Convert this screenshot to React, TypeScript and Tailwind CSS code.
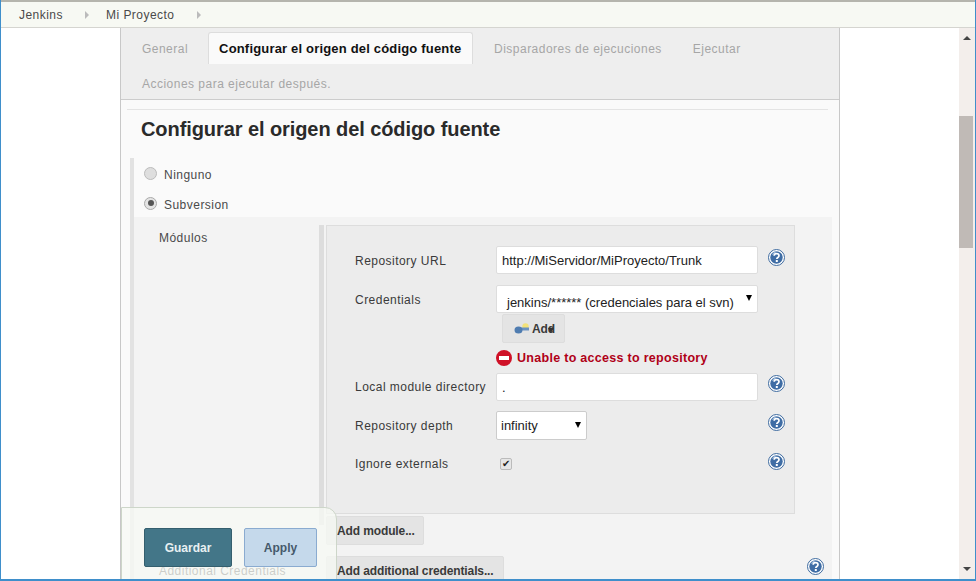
const labelCls = 'w-[141px] shrink-0 text-[#3a3a3a] text-[12px] tracking-[0.47px]'

function Help({ className = '' }: { className?: string }) {
  return (
    <svg width="17" height="17" viewBox="0 0 17 17" className={className}>
      <circle cx="8.5" cy="8.5" r="8" fill="#fff" stroke="#3d6a9f" strokeWidth="1" />
      <circle cx="8.5" cy="8.5" r="6.2" fill="#3f6da5" />
      <path d="M4 6a5 5 0 0 1 5-3.5c-2 1.5-3 3-5 3.5z" fill="#9dbbdc" />
      <path d="M6.2 6.8c0-3 4.8-3 4.8 0 0 1.8-2.2 1.6-2.2 3.3" fill="none" stroke="#fff" strokeWidth="1.7" />
      <rect x="7.8" y="11" width="2" height="2" fill="#fff" />
    </svg>
  )
}

function KeyIcon() {
  return (
    <svg width="16" height="12" viewBox="0 0 16 12" className="absolute left-[11px] top-[8px]">
      <circle cx="11.5" cy="3.5" r="3.2" fill="#f3e27a" />
      <rect x="4" y="4.5" width="11" height="3" fill="#6a92c2" />
      <ellipse cx="4.5" cy="7" rx="4" ry="3.6" fill="#4f7cb0" />
    </svg>
  )
}

function Row({ label, help = true, helpCls = '-mt-[6px]', labelTop = '', children, className = '' }: { label: string; help?: boolean; helpCls?: string; labelTop?: string; children: React.ReactNode; className?: string }) {
  return (
    <div className={`flex items-center ${className}`}>
      <div className={`${labelCls} ${labelTop}`}>{label}</div>
      <div className="w-[262px] shrink-0">{children}</div>
      {help && <Help className={`ml-[10px] ${helpCls}`} />}
    </div>
  )
}

function Input({ value }: { value: string }) {
  return (
    <div className="h-[28px] w-[262px] bg-white border border-[#ddd] rounded-[2px] px-[5px] pt-[2px] flex items-center text-[13px] text-[#222]">
      {value}
    </div>
  )
}

function Tab({ label, active = false }: { label: string; active?: boolean }) {
  if (active) {
    return (
      <div className="h-[32px] w-[265px] pl-[10px] pt-[1px] mr-[11px] flex items-center bg-[#fafafa] border border-b-0 border-[#ddd] rounded-t-[3px] font-bold text-[#111] text-[13px] tracking-[0.18px] whitespace-nowrap">
        {label}
      </div>
    )
  }
  return <div className="h-[32px] px-[10px] pt-[1px] mr-[11px] flex items-center text-[#a6a6a6] text-[12px] tracking-[0.48px]">{label}</div>
}

function GrayButton({ label, className = '', children }: { label: string; className?: string; children?: React.ReactNode }) {
  return (
    <div className={`bg-[#e4e4e4] border border-[#ddd] rounded-[2px] font-bold text-[12px] tracking-[-0.12px] text-[#3a3a3a] flex items-center ${className}`}>
      {children}
      {label}
    </div>
  )
}

export default function App() {
  return (
    <div className="relative h-[581px] w-[976px] overflow-hidden bg-white border-x border-b-2 border-[#3f8fcb] font-['Liberation_Sans',Arial,sans-serif] flex flex-col">
      <div className="h-[28px] shrink-0 bg-[#f7f9f3] border-t-2 border-t-[#b5b5ad] border-b border-b-[#d5d5d0] flex items-center pl-[18px] pt-[1px] text-[12px] text-[#4a4a4a] tracking-[0.47px]">
        <span>Jenkins</span>
        <span className="ml-[22px] w-0 h-0 border-y-[4px] border-y-transparent border-l-[4px] border-l-[#bbb]" />
        <span className="ml-[17px]">Mi Proyecto</span>
        <span className="ml-[22px] w-0 h-0 border-y-[4px] border-y-transparent border-l-[4px] border-l-[#bbb]" />
      </div>

      <div className="flex-1 min-h-0 flex">
        <div className="w-[119px] shrink-0" />
        <div className="w-[720px] shrink-0 border-x border-[#c8c8c8] bg-[#fafafa] overflow-hidden">
          <div className="h-[72px] bg-[#eee] border-b border-[#ccc] pt-[4px] pl-[10px]">
            <div className="flex items-center">
              <div className="ml-[1px] -mr-[1px]">
                <Tab label="General" />
              </div>
              <Tab label="Configurar el origen del código fuente" active />
              <Tab label="Disparadores de ejecuciones" />
              <Tab label="Ejecutar" />
            </div>
            <div className="h-[36px] pl-[11px] pt-[3px] flex items-center text-[#a6a6a6] text-[12px] tracking-[0.48px]">Acciones para ejecutar después.</div>
          </div>

          <div className="mt-[9px] mx-[6px] border-t border-[#e4e4e4] pl-[14px] pt-[8px] h-[38px] text-[20px] font-bold text-[#2a2a2a] tracking-[-0.08px] leading-[22px] w-[701px]">
            Configurar el origen del código fuente
          </div>

          <div className="ml-[9px] mt-[11px] border-l-[4px] border-[#e2e2e2]">
            <div className="h-[59px] pl-[10px] pt-[3px] text-[12px] text-[#4a4a4a] tracking-[0.47px]">
              <div className="h-[30px] flex items-center -mt-[1px]">
                <span className="w-[13px] h-[13px] -mt-[4px] rounded-full bg-[#dedede] border border-[#bbb] mr-[7px]" />
                <span>Ninguno</span>
              </div>
              <div className="h-[30px] flex items-center">
                <span className="w-[13px] h-[13px] -mt-[4px] rounded-full bg-[#e4e4e4] border border-[#aaa] mr-[7px] flex items-center justify-center">
                  <span className="w-[6px] h-[6px] rounded-full bg-[#555]" />
                </span>
                <span>Subversion</span>
              </div>
            </div>

            <div className="bg-[#f3f3f3] w-[698px] h-[380px] pt-[8px] flex">
              <div className="w-[185px] shrink-0 pl-[25px] pt-[5px] text-[12px] text-[#4a4a4a] tracking-[0.47px]">
                <div className="h-[16px] leading-[16px]">Módulos</div>
                <div className="h-[317px]" />
                <div className="h-[16px] leading-[16px]">Additional Credentials</div>
              </div>
              <div className="border-l-[5px] border-[#ddd] h-[300px] mr-[2px]" />
              <div className="flex-1">
                <div className="w-[469px] h-[289px] bg-[#ececec] border border-[#ddd] pl-[28px] pt-[20px]">
                  <Row label="Repository URL" labelTop="pt-[1px]">
                    <Input value="http://MiServidor/MiProyecto/Trunk" />
                  </Row>
                  <Row label="Credentials" labelTop="pt-[1px]" help={false} className="mt-[11px]">
                    <div className="relative h-[28px] w-[262px] bg-white border border-[#ddd] rounded-[2px] pl-[10px] overflow-hidden text-[13px] text-[#222] leading-[33px] whitespace-nowrap">
                      jenkins/****** (credenciales para el svn)
                      <span className="absolute right-[5px] top-[9px] w-0 h-0 border-x-[3.5px] border-x-transparent border-t-[6px] border-t-black" />
                    </div>
                  </Row>
                  <GrayButton label="Add" className="relative ml-[147px] mt-[1px] w-[63px] h-[29px] pl-[29px]">
                    <KeyIcon />
                    <span className="absolute left-[45px] top-[13px] w-0 h-0 border-x-[3.5px] border-x-transparent border-t-[5px] border-t-[#333]" />
                  </GrayButton>
                  <div className="ml-[141px] mt-[7px] h-[16px] flex items-center font-bold text-[12.5px] text-[#b00018] tracking-[0.29px]">
                    <span className="w-[16px] h-[16px] rounded-full bg-[#cf1127] mr-[5px] flex items-center justify-center shrink-0">
                      <span className="w-[10px] h-[4px] bg-white" />
                    </span>
                    Unable to access to repository
                  </div>
                  <Row label="Local module directory" helpCls="-mt-[8px]" className="mt-[7px]">
                    <Input value="." />
                  </Row>
                  <Row label="Repository depth" helpCls="-mt-[7px]" className="mt-[10px]">
                    <div className="relative h-[29px] w-[91px] bg-white border border-[#ccc] rounded-[2px] pl-[4px] pt-[1px] flex items-center text-[13px] text-[#222]">
                      infinity
                      <span className="absolute right-[5px] top-[10px] w-0 h-0 border-x-[3.5px] border-x-transparent border-t-[6px] border-t-black" />
                    </div>
                  </Row>
                  <Row label="Ignore externals" className="mt-[15px]">
                    <span className="ml-[4px] w-[12px] h-[12px] bg-[#e6e6e6] border border-[#bbb] rounded-[2px] flex items-center justify-center text-[10px] leading-none text-[#222]">✔</span>
                  </Row>
                </div>
                <GrayButton label="Add module..." className="mt-[2px] w-[98px] h-[29px] pl-[10px]" />
                <div className="mt-[11px] flex">
                  <GrayButton label="Add additional credentials..." className="w-[178px] h-[29px] pl-[10px]" />
                  <Help className="ml-[303px] mt-[2px]" />
                </div>
              </div>
            </div>
          </div>
        </div>
        <div className="flex-1" />
        <div className="w-[16px] shrink-0 bg-[#f3eeeb] relative flex flex-col items-center">
          <span className="mt-[8px] w-0 h-0 border-x-[4px] border-x-transparent border-b-[4px] border-b-[#444]" />
          <div className="absolute top-[88px] left-0 w-[14px] h-[132px] bg-[#c0bab6]" />
          <span className="mt-auto mb-[8px] w-0 h-0 border-x-[4px] border-x-transparent border-t-[4px] border-t-[#444]" />
        </div>
      </div>

      {/* barra flotante de guardar */}
      <div className="absolute left-[120px] top-[507px] w-[216px] h-[80px] bg-[#f7f9f4]/75 border border-[#cdd6c9] rounded-tr-[12px] flex items-start gap-[12px] pl-[22px] pt-[20px]">
        <div className="w-[88px] h-[39px] bg-[#437688] border border-[#345f6e] rounded-[2px] flex items-center justify-center font-bold text-[12px] text-[#e8f0f2]">Guardar</div>
        <div className="w-[73px] h-[39px] bg-[#c5d9eb] border border-[#8aabd0] rounded-[2px] flex items-center justify-center font-bold text-[12px] text-[#45596b]">Apply</div>
      </div>
    </div>
  )
}
